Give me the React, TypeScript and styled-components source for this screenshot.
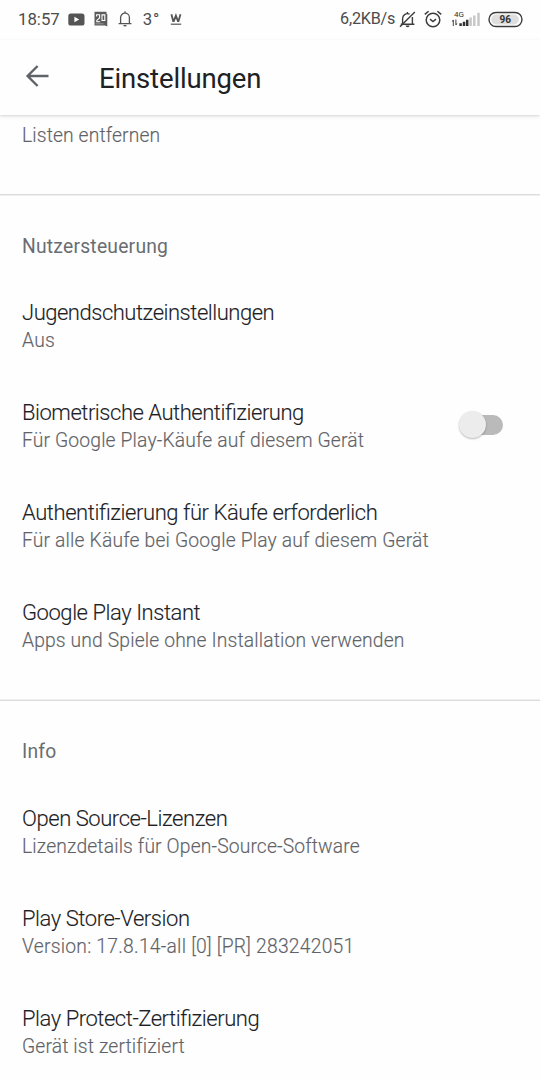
import React from 'react';
import styled, { createGlobalStyle } from 'styled-components';

const GlobalStyle = createGlobalStyle`
  * { box-sizing: border-box; }
  html, body { margin: 0; padding: 0; background: #fefefe; }
  body { overflow: hidden; font-family: Roboto, sans-serif; }
`;

const Screen = styled.div`
  width: 540px;
  height: 1080px;
  overflow: hidden;
  display: flex;
  flex-direction: column;
  background: #fefefe;
`;

const StatusBar = styled.div`
  height: 40px;
  flex: none;
  display: flex;
  align-items: center;
  justify-content: space-between;
  padding: 0 17px 2px 18px;
  color: #4c4c4c;
`;

const StatusGroup = styled.div`
  display: flex;
  align-items: center;
`;

const StatusText = styled.span<{ $size: number; $spacing?: number }>`
  font-size: ${(p) => p.$size}px;
  letter-spacing: ${(p) => p.$spacing ?? 0}px;
  line-height: 20px;
  white-space: nowrap;
`;

const Glyph = styled.svg<{ $left: number }>`
  display: block;
  flex: none;
  margin-left: ${(p) => p.$left}px;
`;

const Header = styled.header`
  height: 75px;
  flex: none;
  display: flex;
  align-items: center;
  padding-left: 25px;
  background: #fefefe;
  box-shadow: 0 1px 2px rgba(0, 0, 0, 0.12), 0 2px 6px rgba(0, 0, 0, 0.05);
  z-index: 1;
`;

const BackButton = styled.button`
  border: 0;
  padding: 0;
  margin: 0 49px 4px 0;
  background: none;
  color: #5f6368;
  display: flex;
`;

const Title = styled.h1`
  margin: 2px 0 0;
  font-size: 27.5px;
  line-height: 34px;
  font-weight: 400;
  letter-spacing: -0.15px;
  color: #202124;
`;

const List = styled.main`
  flex: 1;
  min-height: 0;
  overflow: hidden;
`;

const Section = styled.section`
  padding-bottom: 22px;
`;

const Divider = styled.div<{ $top: string; $bottom: string }>`
  height: 2px;
  border-top: 1px solid ${(p) => p.$top};
  border-bottom: 1px solid ${(p) => p.$bottom};
`;

const SectionTitle = styled.h2<{ $below: number }>`
  margin: 0;
  padding: 37px 22px ${(p) => p.$below}px;
  font-size: 19.3px;
  line-height: 27px;
  font-weight: 400;
  letter-spacing: 0.22px;
  color: #696d71;
`;

const Row = styled.div`
  height: 100px;
  padding: 0 37px 0 22px;
  display: flex;
  align-items: center;
  justify-content: space-between;
`;

const RowTitle = styled.div<{ $spacing: number }>`
  font-size: 22px;
  line-height: 28px;
  font-weight: 300;
  font-feature-settings: 'liga' 1;
  letter-spacing: ${(p) => p.$spacing}px;
  color: #202124;
  -webkit-text-stroke: 0.1px #202124;
  white-space: nowrap;
`;

const RowSummary = styled.div<{ $spacing: number }>`
  font-size: 19.3px;
  line-height: 28px;
  font-weight: 300;
  letter-spacing: ${(p) => p.$spacing}px;
  color: #5f6368;
  -webkit-text-stroke: 0.15px #5f6368;
  white-space: nowrap;
`;

const Remainder = styled.div`
  height: 79px;
  padding: 7px 22px 0;
`;

const SwitchTrack = styled.div`
  position: relative;
  width: 36px;
  height: 20px;
  margin-bottom: 5px;
  border-radius: 10px;
  background: #bababa;
`;

const SwitchThumb = styled.span`
  position: absolute;
  left: -8px;
  top: -4px;
  width: 27px;
  height: 27px;
  border-radius: 50%;
  background: #ececec;
  box-shadow: 0 1px 2px rgba(0, 0, 0, 0.28);
`;

type Item = { title: string; summary: string; fit: [number, number]; toggle?: boolean };

const controls: Item[] = [
  { title: 'Jugendschutzeinstellungen', summary: 'Aus', fit: [-0.48, 0.25] },
  { title: 'Biometrische Authentifizierung', summary: 'Für Google Play-Käufe auf diesem Gerät', fit: [-0.47, 0.15], toggle: true },
  { title: 'Authentifizierung für Käufe erforderlich', summary: 'Für alle Käufe bei Google Play auf diesem Gerät', fit: [-0.43, 0.17] },
  { title: 'Google Play Instant', summary: 'Apps und Spiele ohne Installation verwenden', fit: [-0.45, 0.14] },
];

const info: Item[] = [
  { title: 'Open Source-Lizenzen', summary: 'Lizenzdetails für Open-Source-Software', fit: [-0.44, 0.14] },
  { title: 'Play Store-Version', summary: 'Version: 17.8.14-all [0] [PR] 283242051', fit: [-0.44, 0.24] },
  { title: 'Play Protect-Zertifizierung', summary: 'Gerät ist zertifiziert', fit: [-0.46, 0.14] },
];

const Entry = ({ title, summary, fit, toggle }: Item) => (
  <Row>
    <div>
      <RowTitle $spacing={fit[0]}>{title}</RowTitle>
      <RowSummary $spacing={fit[1]}>{summary}</RowSummary>
    </div>
    {toggle && (
      <SwitchTrack role="switch" aria-checked={false}>
        <SwitchThumb />
      </SwitchTrack>
    )}
  </Row>
);

const StatusIcons = () => (
  <StatusBar>
    <StatusGroup>
      <StatusText $size={16.8}>18:57</StatusText>
      <Glyph $left={8} width="17" height="13" viewBox="0 0 17 13">
        <rect x="0.3" y="0.5" width="16.2" height="12" rx="2.6" fill="#555" />
        <path d="M6.4 3.8v5.4l4.8-2.7z" fill="#fff" />
      </Glyph>
      <Glyph $left={9} width="14" height="16" viewBox="0 0 14 16">
        <path d="M0.5 0.8h12v2.2h.8v12.6L11 14.6H0.5z" fill="#5c5c5c" />
        <path d="M2.6 5.4V3.8h3V7L2.8 9.4v1.4h3.4M8 3.9h2.8v5.6H8z" fill="none" stroke="#fff" strokeWidth="1.1" />
        <path d="M1.5 12.8h8" stroke="#aaa" strokeWidth="0.8" />
      </Glyph>
      <Glyph $left={10} width="14" height="16" viewBox="0 0 14 16">
        <path d="M0.6 12.6h12.8M2.6 12.4V6.6a4.4 4.4 0 0 1 8.8 0v5.8M7 .3v2" fill="none" stroke="#555" strokeWidth="1.3" />
        <path d="M5.3 13.9h3.4a1.7 1.7 0 0 1-3.4 0z" fill="#555" />
      </Glyph>
      <Glyph $left={0} width="11" height="1" />
      <StatusText $size={16.8} $spacing={0.7}>3°</StatusText>
      <Glyph $left={10} width="12" height="15" viewBox="0 -1 12 15">
        <path d="M1.4 1.2l1.8 6.8h.6L5.9 2.6 7.9 8h.6l2-6.8" fill="none" stroke="#555" strokeWidth="1.8" />
        <path d="M0.8 11.2h10.4" stroke="#555" strokeWidth="1.2" />
      </Glyph>
    </StatusGroup>
    <StatusGroup>
      <StatusText $size={16.2} $spacing={-0.25}>6,2KB/s</StatusText>
      <Glyph $left={4} width="17" height="17" viewBox="0 0 17 17">
        <path d="M1.8 13.2h13.6M3.6 12.8V7.4a4.8 4.8 0 0 1 7-4.2M13.4 6v7M8.4 1v1.6" fill="none" stroke="#3c3c3c" strokeWidth="1.4" />
        <path d="M15.8 1L1 15.8" stroke="#3c3c3c" strokeWidth="1.4" />
        <path d="M6.6 14.6h4a2 1.7 0 0 1-4 0z" fill="#3c3c3c" />
      </Glyph>
      <Glyph $left={8} width="18" height="18" viewBox="0 0 18 18">
        <circle cx="9" cy="10" r="6.8" fill="none" stroke="#3c3c3c" strokeWidth="1.5" />
        <path d="M6 9.2L9 11.6l3-2.4M0.8 4.4L4.6 1.2M17.2 4.4l-3.8-3.2" fill="none" stroke="#3c3c3c" strokeWidth="1.5" />
      </Glyph>
      <Glyph $left={9} width="30" height="20" viewBox="0 0 30 20">
        <text x="3" y="7.5" fontSize="8" fontFamily="Roboto" fill="#333">4G</text>
        <path d="M2.3 11v6M4.9 10.5v5.5" stroke="#444" strokeWidth="1" />
        <path d="M0.6 12.6L2.3 10.6v2zM6.6 14.4l-1.7 2v-2z" fill="#444" />
        <path d="M9.6 14.2V17M13 12.7V17M16.2 10.8V17" stroke="#333" strokeWidth="2.5" />
        <path d="M19.6 8.6V17M23.3 6.4V17M27.5 3.8V17" stroke="#c8c8c8" strokeWidth="2.5" />
      </Glyph>
      <Glyph $left={7} width="35" height="17" viewBox="0 0 35 17">
        <rect x="1" y="1.5" width="33" height="14" rx="7" fill="#fff" stroke="#3c3c3c" strokeWidth="1.4" />
        <rect x="3.2" y="3.6" width="27.6" height="9.8" rx="4.9" fill="#dedede" />
        <text x="17.3" y="12.2" fontSize="10" fontWeight="700" fontFamily="Roboto" fill="#333" textAnchor="middle">96</text>
      </Glyph>
    </StatusGroup>
  </StatusBar>
);

export default function App() {
  return (
    <Screen>
      <GlobalStyle />
      <StatusIcons />
      <Header>
        <BackButton aria-label="Zurück">
          <svg width="25" height="24" viewBox="0 0 25 24">
            <path d="M23.5 12H3M12.6 2L2.6 12l10 10" fill="none" stroke="currentColor" strokeWidth="2.4" />
          </svg>
        </BackButton>
        <Title>Einstellungen</Title>
      </Header>
      <List>
        <Remainder>
          <RowSummary $spacing={0.12}>Listen entfernen</RowSummary>
        </Remainder>
        <Divider $top="#dcdcdc" $bottom="#f0f0f0" />
        <Section>
          <SectionTitle $below={17}>Nutzersteuerung</SectionTitle>
          {controls.map((item) => (
            <Entry key={item.title} {...item} />
          ))}
        </Section>
        <Divider $top="#efefef" $bottom="#dcdcdc" />
        <Section>
          <SectionTitle $below={18}>Info</SectionTitle>
          {info.map((item) => (
            <Entry key={item.title} {...item} />
          ))}
        </Section>
      </List>
    </Screen>
  );
}
